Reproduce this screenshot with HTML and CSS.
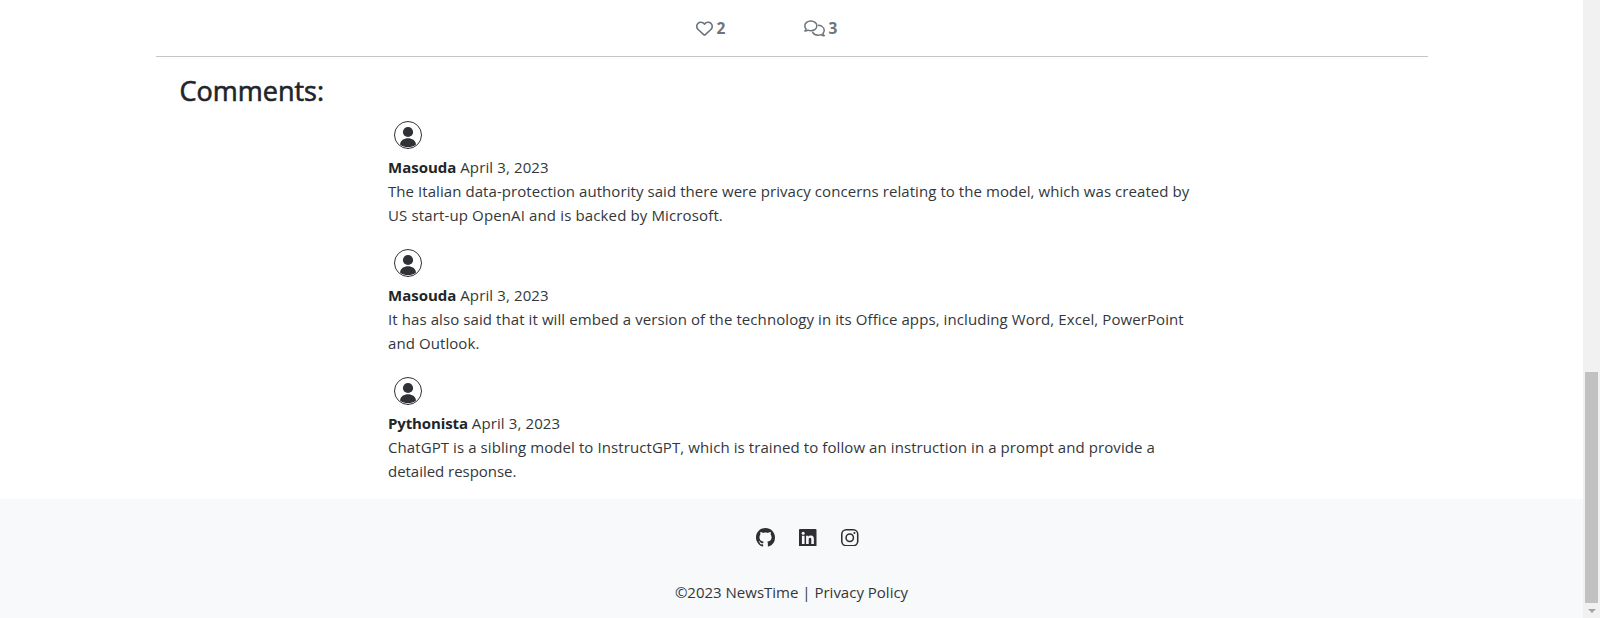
FILE: index.html
```
<!DOCTYPE html>
<html lang="en">
<head>
<meta charset="utf-8">
<title>NewsTime</title>
<link rel="stylesheet" href="styles.css">
</head>
<body>
<svg class="defs" aria-hidden="true">
  <symbol id="avatar" viewBox="0 0 28 28">
    <circle cx="14" cy="14" r="13.5" fill="none" stroke="currentColor"/>
    <circle cx="14" cy="11" r="5.1" fill="currentColor"/>
    <path d="M6 23.500C6.400 19.500 10 17.300 14 17.300s7.600 2.200 8 6.200C20 25.300 17 26.200 14 26.200S8 25.300 6 23.500z" fill="currentColor"/>
  </symbol>
</svg>
<div class="page">
  <main class="main">
    <div class="stats">
      <span class="stat"><svg class="heart" viewBox="0 0 512 512" fill="currentColor"><path d="M225.800 468.200l-2.500-2.300L48.100 303.200C17.400 274.700 0 234.700 0 192.800v-3.300c0-70.400 50-130.800 119.200-144C158.600 37.900 198.900 47 231 69.600c9 6.400 17.400 13.800 25 22.300c4.200-4.800 8.700-9.200 13.500-13.300c3.700-3.200 7.500-6.200 11.500-9C313.100 47 353.400 37.900 392.800 45.400C462 58.600 512 119.100 512 189.500v3.300c0 41.900-17.400 81.900-48.100 110.400L288.700 465.900l-2.500 2.300c-8.200 7.600-19 11.900-30.200 11.900s-22-4.200-30.200-11.900zM239.100 145c-.4-.3-.7-.7-1-1.100l-17.800-20c-23.100-25.900-58-37.700-92-31.200C81.600 101.500 48 142.100 48 189.500v3.300c0 28.500 11.900 55.800 32.800 75.200L256 430.700 431.200 268c20.900-19.400 32.800-46.700 32.800-75.200v-3.300c0-47.300-33.600-88-80.100-96.900c-34-6.500-69 5.400-92 31.200l-18 20.200c-4.500 4.500-10.600 8-17.900 8s-12.400-2.500-16.900-7z"/></svg><b>2</b></span>
      <span class="stat"><svg class="bubbles" viewBox="0 0 640 512" fill="none" stroke="currentColor" stroke-width="46" stroke-linejoin="round" stroke-linecap="round"><path d="M208 24C106 24 24 88 24 174c0 38 16 72 40 98-6 26-20 46-38 62 40 0 72-12 98-30 26 12 54 18 84 18 102 0 184-62 184-148S310 24 208 24z"/><path d="M446 160c96 8 170 74 170 152 0 38-16 70-40 96 6 28 20 48 38 66-40 0-72-12-98-32-26 12-54 18-84 18-76 0-140-36-168-86"/></svg><b>3</b></span>
    </div>
    <hr class="rule">
    <h3 class="title"><span>Comments:</span></h3>
    <div class="comments">
      <article class="comment">
        <svg class="avatar"><use href="#avatar"/></svg>
        <div class="meta"><b>Masouda</b> <span>April 3, 2023</span></div>
        <p><span class="l1">The Italian data-protection authority said there were privacy concerns relating to the model, which was created by</span><br><span class="l2">US start-up OpenAI and is backed by Microsoft.</span></p>
      </article>
      <article class="comment">
        <svg class="avatar"><use href="#avatar"/></svg>
        <div class="meta"><b>Masouda</b> <span>April 3, 2023</span></div>
        <p><span class="l3">It has also said that it will embed a version of the technology in its Office apps, including Word, Excel, PowerPoint</span><br><span class="l4">and Outlook.</span></p>
      </article>
      <article class="comment">
        <svg class="avatar"><use href="#avatar"/></svg>
        <div class="meta"><b class="long">Pythonista</b> <span>April 3, 2023</span></div>
        <p><span class="l5">ChatGPT is a sibling model to InstructGPT, which is trained to follow an instruction in a prompt and provide a</span><br><span class="l6">detailed response.</span></p>
      </article>
    </div>
  </main>
  <footer class="footer">
    <div class="social">
      <svg class="github" viewBox="0 0 16 16" fill="currentColor"><path d="M8 0C3.580 0 0 3.580 0 8c0 3.540 2.290 6.530 5.470 7.590.4.070.55-.17.55-.38 0-.19-.01-.82-.01-1.490-2.010.37-2.530-.49-2.690-.94-.09-.23-.48-.94-.82-1.130-.28-.15-.68-.52-.01-.53.63-.01 1.080.58 1.230.82.72 1.210 1.870.87 2.330.66.07-.52.28-.87.51-1.070-1.780-.2-3.640-.89-3.640-3.950 0-.87.31-1.590.82-2.150-.08-.2-.36-1.020.08-2.120 0 0 .67-.21 2.200.82.64-.18 1.320-.27 2-.27s1.360.09 2 .27c1.530-1.040 2.200-.82 2.200-.82.44 1.100.16 1.920.08 2.120.51.56.82 1.270.82 2.150 0 3.070-1.870 3.750-3.650 3.950.29.25.54.73.54 1.480 0 1.070-.01 1.930-.01 2.200 0 .21.15.46.55.38A8.010 8.010 0 0 0 16 8c0-4.420-3.580-8-8-8z"/></svg>
      <svg class="linkedin" viewBox="0 0 18 18"><rect width="18" height="18" rx="1" fill="currentColor"/><g fill="#f8f9fa"><circle cx="4.300" cy="4.300" r="1.550"/><path d="M3 7h2.700v8.300H3zM7.300 7h2.500v1.150C10.300 7.300 11.200 6.750 12.300 6.750c2.400 0 3 1.550 3 3.800v4.750h-2.650v-4.200c0-1.100 0-2.100-1.300-2.100S10 10 10 11.100v4.200H7.300z"/></g></svg>
      <svg class="instagram" viewBox="0 0 18 18" fill="none" stroke="currentColor" stroke-width="1.600"><rect x=".8" y=".8" width="16.400" height="16.400" rx="4.600"/><circle cx="9" cy="9" r="3.800"/><circle cx="13.800" cy="4.200" r="1.050" fill="currentColor" stroke="none"/></svg>
    </div>
    <p class="copy"><span>©2023 NewsTime | Privacy Policy</span></p>
  </footer>
</div>
<div class="scrollbar"><div class="thumb"></div><div class="arrow"></div></div>
</body>
</html>
```
FILE: styles.css
```
* { box-sizing: border-box; }
body {
  margin: 0;
  height: 618px;
  display: flex;
  overflow: hidden;
  background: #fff;
  color: #212529;
  font: 400 15px/24px "Open Sans", "Noto Sans", sans-serif;
}
b { font-weight: 700; font-size: 15px; }
p { margin: 0; }
svg { display: block; flex: none; }
.defs { width: 0; height: 0; position: absolute; }
.page { flex: 1; display: flex; flex-direction: column; }
.main { height: 499px; width: 1272px; margin-left: 156px; }
.stats { height: 56px; padding: 16px 0 0 539.5px; display: flex; color: #6c757d; }
.stat { display: flex; width: 108px; height: 24px; align-items: center; gap: 5px; }
.heart { width: 17px; height: 17px; }
.bubbles { width: 21px; height: 17px; }
.stat b { margin-left: -1px; font-size: 15.5px; }
.rule { margin: 0; border: 0; height: 1px; background: #c4c5c6; }
.title { margin: 0; padding: 17px 0 0 23.5px; height: 64px; font-size: 27px; line-height: 33px; font-weight: 400; -webkit-text-stroke: .6px currentColor; }
.comments { padding-left: 232px; white-space: nowrap; }
.comment { height: 128px; }
.comment p, .meta span, .copy { color: #33373b; }
.meta span { letter-spacing: .12px; }
.long { letter-spacing: -.12px; }
.l1 { letter-spacing: .065px; }
.l2 { letter-spacing: .135px; }
.l3 { letter-spacing: .088px; }
.l4 { letter-spacing: .08px; }
.l5 { letter-spacing: .086px; }
.l6 { letter-spacing: -.03px; }
.avatar { width: 28px; height: 28px; margin: 0 0 6px 6px; color: #2f3136; }
.footer { flex: 1; background: #f8f9fa; display: flex; flex-direction: column; align-items: center; }
.social { display: flex; align-items: center; height: 18px; margin: 29.5px 0 0 31px; gap: 24.500px; color: #2f2f33; }
.github { width: 19px; height: 19px; }
.linkedin, .instagram { width: 17.500px; height: 17.500px; }
.copy { margin-top: 33px; }
.scrollbar { width: 17px; background: #f1f1f1; display: flex; flex-direction: column; align-items: center; padding-top: 372px; }
.thumb { width: 13px; height: 231px; background: #c1c1c1; }
.arrow { margin-top: 6px; border: 4px solid transparent; border-top-color: #a3a3a3; border-bottom: 0; }
```
